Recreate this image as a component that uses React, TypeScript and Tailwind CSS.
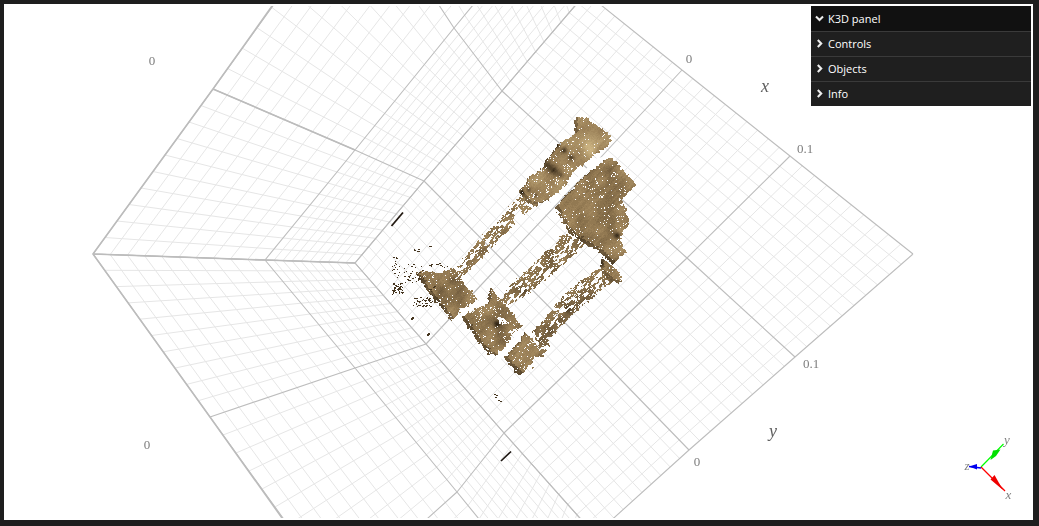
import React from "react";

type P = [number, number];

// ---------- grid ----------
const floor: P[][] = [
  [[355, 263], [424, 181], [502, 91], [586, -7]],
  [[426, 344], [503.5, 261], [589, 170], [682, 70]],
  [[504, 433], [591, 349], [687, 258], [790, 156]],
  [[595, 535], [689, 450], [795, 357], [913, 254]],
];
const upper: P[][] = [
  [[93, 254], [265, 260], [355, 263]],
  [[213, 89], [355, 150], [424, 181]],
  [[360, -115], [454, 28], [502, 91]],
  [[500, -290], [560, -100], [586, -7]],
];
const lower: P[][] = [
  [[93, 254], [265, 260], [355, 263]],
  [[210, 417], [355, 368], [426, 344]],
  [[340, 597], [457, 492], [504, 433]],
  [[460, 770], [567, 627], [595, 535]],
];

const lerp = (a: P, b: P, t: number): P => [a[0] + (b[0] - a[0]) * t, a[1] + (b[1] - a[1]) * t];
const seg = (a: P, b: P) => `M${a[0].toFixed(1)} ${a[1].toFixed(1)}L${b[0].toFixed(1)} ${b[1].toFixed(1)}`;

function gridPaths(t: P[][]) {
  let minor = "";
  let major = "";
  for (let i = 0; i < t.length - 1; i++) {
    for (let j = 0; j < t[0].length - 1; j++) {
      const a = t[i][j], b = t[i][j + 1], c = t[i + 1][j + 1], d = t[i + 1][j];
      for (let k = 1; k < 10; k++) {
        const f = k / 10;
        minor += seg(lerp(a, b, f), lerp(d, c, f));
        minor += seg(lerp(a, d, f), lerp(b, c, f));
      }
    }
  }
  for (let i = 0; i < t.length; i++) for (let j = 0; j < t[0].length - 1; j++) major += seg(t[i][j], t[i][j + 1]);
  for (let j = 0; j < t[0].length; j++) for (let i = 0; i < t.length - 1; i++) major += seg(t[i][j], t[i + 1][j]);
  return { minor, major };
}
const grids = [gridPaths(floor), gridPaths(upper), gridPaths(lower)];

// ---------- scan point cloud ----------
const hash = (x: number, y: number) => {
  const s = Math.sin(x * 127.1 + y * 311.7) * 43758.5453;
  return s - Math.floor(s);
};
const vnoise = (x: number, y: number) => {
  const xi = Math.floor(x), yi = Math.floor(y);
  const fx = x - xi, fy = y - yi;
  const ux = fx * fx * (3 - 2 * fx), uy = fy * fy * (3 - 2 * fy);
  const a = hash(xi, yi), b = hash(xi + 1, yi), c = hash(xi, yi + 1), d = hash(xi + 1, yi + 1);
  return a + (b - a) * ux + (c - a) * uy + (a - b - c + d) * ux * uy;
};
// traced in 3x crop coordinates with origin (380,100)
const Z = (pts: number[][]): P[] => pts.map(([x, y]) => [380 + x / 3, 100 + y / 3]);
const inside = (poly: P[], x: number, y: number) => {
  let r = false;
  for (let i = 0, j = poly.length - 1; i < poly.length; j = i++) {
    const [xi, yi] = poly[i], [xj, yj] = poly[j];
    if (yi > y !== yj > y && x < ((xj - xi) * (y - yi)) / (yj - yi) + xi) r = !r;
  }
  return r;
};
type Region = { poly: P[]; base: number; density: number };
const regions: Region[] = [
  { base: 0.58, density: 1, poly: Z([[590,47],[615,50],[650,75],[690,105],[692,125],[665,150],[640,165],[610,190],[585,205],[565,235],[555,255],[505,295],[470,315],[440,305],[415,275],[445,232],[478,208],[505,170],[528,138],[560,115],[585,100],[580,70]]) },
  { base: 0.52, density: 0.6, poly: Z([[420,285],[475,312],[435,335],[395,375],[345,430],[295,480],[240,530],[222,520],[262,460],[312,402],[362,352],[402,302]]) },
  { base: 0.52, density: 1, poly: Z([[690,168],[720,200],[765,250],[750,270],[720,295],[735,320],[745,370],[720,410],[735,455],[695,490],[655,455],[610,425],[570,400],[550,370],[525,320],[560,280],[620,220]]) },
  { base: 0.56, density: 1, poly: Z([[665,470],[690,492],[725,525],[720,545],[690,545],[660,510]]) },
  { base: 0.48, density: 0.63, poly: Z([[550,400],[615,425],[590,455],[540,500],[490,540],[430,590],[380,618],[355,600],[398,545],[448,502],[498,452]]) },
  { base: 0.46, density: 0.65, poly: Z([[660,502],[694,545],[655,575],[610,610],[560,660],[510,710],[470,732],[458,690],[512,632],[552,582],[612,532]]) },
  { base: 0.5, density: 1, poly: Z([[100,512],[175,515],[220,505],[270,570],[290,600],[240,630],[215,660],[180,620],[140,570]]) },
  { base: 0.5, density: 1, poly: Z([[240,650],[290,622],[320,610],[330,560],[370,610],[415,665],[430,680],[395,705],[365,745],[345,768],[325,760],[290,720],[270,690]]) },
  { base: 0.53, density: 1, poly: Z([[370,772],[405,735],[435,697],[470,730],[475,760],[450,790],[420,825],[395,800]]) },
  { base: 0.46, density: 0.58, poly: Z([[470,725],[505,700],[505,740],[475,780],[460,805],[448,790]]) },
];
const holes: P[][] = [
  Z([[345,648],[375,655],[385,675],[360,672]]),
  Z([[385,690],[425,682],[395,712]]),
  Z([[252,548],[272,538],[282,556],[264,566]]),
];
const patches: [number, number, number, number][] = [
  // crop x, crop y, radius, delta tone
  [500, 195, 13, -0.36], [520, 210, 14, -0.4], [540, 225, 10, -0.28],
  [532, 135, 8, -0.34], [552, 150, 8, -0.36], [572, 170, 8, -0.34],
  [445, 268, 7, -0.2], [465, 285, 7, -0.2], [425, 275, 7, -0.42],
  [625, 135, 32, 0.26], [710, 405, 10, -0.5], [215, 540, 14, -0.18], [350, 670, 11, -0.36],
  [660, 490, 9, -0.26], [430, 570, 10, -0.2], [560, 625, 12, -0.2],
];
const whites: P[][] = [
  Z([[470,335],[525,300],[590,235],[650,175],[680,168],[625,215],[555,280],[510,330],[455,385]]),
  Z([[218,665],[290,605],[325,590],[335,610],[290,622],[240,650]]),
  Z([[345,770],[425,690],[440,700],[360,780]]),
];
const STEPS = 24;
const ramp = (t: number) => {
  const s: [number, number, number][] = [[34, 24, 12], [152, 126, 86], [224, 202, 148]];
  const [a, b, f] = t < 0.55 ? [s[0], s[1], t / 0.55] : [s[1], s[2], (t - 0.55) / 0.45];
  return `rgb(${a.map((v, i) => Math.round(v + (b[i] - v) * f)).join(",")})`;
};
function buildScan() {
  const buckets: string[] = Array(STEPS).fill("");
  const done = new Set<number>();
  for (const r of regions) {
    const xs = r.poly.map((p) => p[0]), ys = r.poly.map((p) => p[1]);
    for (let y = Math.floor(Math.min(...ys)) - 2; y < Math.max(...ys) + 2; y++) {
      for (let x = Math.floor(Math.min(...xs)) - 2; x < Math.max(...xs) + 2; x++) {
        const key = y * 2000 + x;
        if (done.has(key)) continue;
        const jx = (vnoise(x * 0.5, y * 0.5) - 0.5) * 3.5;
        const jy = (vnoise(x * 0.5 + 40, y * 0.5 + 9) - 0.5) * 3.5;
        if (!inside(r.poly, x + jx, y + jy)) continue;
        done.add(key);
        const h = hash(x, y);
        if (holes.some((p) => inside(p, x + jx, y + jy)) && h < 0.85) continue;
        if (r.density >= 1) {
          if (h < 0.03) continue;
          if (vnoise(x * 0.25 + 5, y * 0.25) > 0.8 && h < 0.25) continue;
        } else {
          const n = vnoise((x + y) * 0.45, (x - y) * 0.2);
          if (n > r.density || h < 0.1) continue;
        }
        let t = r.base + (vnoise(x * 0.1, y * 0.1) - 0.5) * 0.2 + (h - 0.5) * 0.05;
        t += (vnoise((x + y) * 0.4, (x - y) * 0.05) - 0.5) * 0.08;
        if (r.density >= 1 && !inside(r.poly, x + jx - 3, y + jy + 2)) t -= 0.2;
        const cx = (x - 380) * 3, cy = (y - 100) * 3;
        for (const [px, py, rad, d] of patches) {
          const q = ((cx - px) ** 2 + (cy - py) ** 2) / (rad * rad);
          if (q < 4) t += d * Math.exp(-q);
        }
        t = Math.max(0, Math.min(0.999, t));
        buckets[Math.floor(t * STEPS)] += `M${x} ${y}h1v1h-1z`;
      }
    }
  }
  return buckets;
}
const scan = buildScan();

function buildDust() {
  let d = "";
  const areas: [number, number, number, number, number][] = [
    [50, 565, 16, 16, 50], [125, 605, 26, 13, 46], [90, 520, 40, 30, 34], [45, 500, 14, 30, 16],
    [110, 450, 8, 6, 8], [150, 440, 4, 3, 3], [145, 580, 24, 30, 12], [170, 495, 30, 5, 12],
  ];
  let s = 3;
  for (const [cx, cy, rx, ry, n] of areas) {
    for (let i = 0; i < n; i++) {
      s += 1;
      const x = Math.round(380 + (cx + (hash(s, 7) * 2 - 1) * rx) / 3);
      const y = Math.round(100 + (cy + (hash(s, 13) * 2 - 1) * ry) / 3);
      d += `M${x} ${y}h${hash(s, 3) > 0.7 ? 2 : 1}v1h-${hash(s, 3) > 0.7 ? 2 : 1}z`;
    }
  }
  for (const [x, y] of [[95, 650], [92, 653], [140, 703], [143, 700]]) {
    d += `M${Math.round(380 + x / 3)} ${Math.round(100 + y / 3)}h2v2h-2z`;
  }
  for (const [x, y] of [[494, 394], [496, 395], [495, 397], [498, 400], [500, 401]]) d += `M${x} ${y}h2v1h-2z`;
  return d;
}
const dust = buildDust();

// ---------- components ----------
function Chevron({ open }: { open?: boolean }) {
  return (
    <svg width="9" height="9" viewBox="0 0 9 9" className="shrink-0">
      <path
        d={open ? "M1 2.6L4.5 6L8 2.6" : "M2.8 1L6.2 4.5L2.8 8"}
        fill="none"
        stroke="#eeeeee"
        strokeWidth="2.1"
      />
    </svg>
  );
}

function Row({ label, open }: { label: string; open?: boolean }) {
  return (
    <div
      className={`flex h-[25px] items-center gap-[4px] pl-[4px] ${
        open ? "bg-[#111111] pb-[1px]" : "border-t border-[#3a3a3a] bg-[#1f1f1f] pb-[2px]"
      }`}
    >
      <Chevron open={open} />
      <span className="text-[11px] font-medium leading-none text-white">{label}</span>
    </div>
  );
}

function Viewport() {
  return (
    <svg width="1025" height="512" viewBox="6 6 1025 512" className="block">
      {grids.map((g, i) => (
        <path key={i} d={g.minor} fill="none" stroke="#e6e6e6" strokeWidth="1" />
      ))}
      {grids.map((g, i) => (
        <path key={i} d={g.major} fill="none" stroke="#bdbdbd" strokeWidth="1.1" />
      ))}
      <path
        d="M272 6L213 89L93 254L210 417L282 518M93 254L265 260L355 263M213 89L355 150"
        fill="none"
        stroke="#bcbcbc"
        strokeWidth="1.6"
      />
      {whites.map((w, i) => (
        <polygon key={i} points={w.map((p) => p.join(",")).join(" ")} fill="#ffffff" />
      ))}
      <g shapeRendering="crispEdges">
        {scan.map((d, i) => (d ? <path key={i} d={d} fill={ramp((i + 0.5) / STEPS)} /> : null))}
        <path d={dust} fill="#45351f" />
      </g>
      <path d="M391.5 226L403 212.5" stroke="#231a12" strokeWidth="1.8" />
      <path d="M501 461L511 451.5" stroke="#1c1510" strokeWidth="1.6" />

      <g className="fill-[#7d7d7d] font-['Liberation_Serif'] text-[13px] grayscale" textAnchor="middle">
        <text x="152" y="65">0</text>
        <text x="689" y="63">0</text>
        <text x="147" y="449">0</text>
        <text x="697" y="466">0</text>
        <text x="805" y="153">0.1</text>
        <text x="811" y="368">0.1</text>
      </g>
      <g className="fill-[#606060] font-['Liberation_Serif'] text-[18px] italic grayscale" textAnchor="middle">
        <text x="765" y="92">x</text>
        <text x="773" y="437">y</text>
      </g>

      {/* axes helper */}
      <path d="M981 467L1003.5 444" stroke="#00ff00" strokeWidth="1.2" />
      <path d="M990.5 460L993 450.5L1000.5 449.5L996 456Z" fill="#00e000" />
      <path d="M981 467L1005 491" stroke="#ff0000" strokeWidth="1.2" />
      <path d="M990.5 479.5L1003 490L994.5 475Z" fill="#ee0000" />
      <path d="M981 468L969 466.5" stroke="#0000ff" strokeWidth="1.6" />
      <path d="M969 466.5L977 464L977 469.5Z" fill="#0000ee" />
      <g className="fill-[#808080] font-['Liberation_Serif'] text-[13px] italic grayscale" textAnchor="middle">
        <text x="1007" y="444">y</text>
        <text x="967" y="470">z</text>
        <text x="1008.5" y="499">x</text>
      </g>
    </svg>
  );
}

export default function App() {
  return (
    <div className="h-[526px] w-[1039px] overflow-hidden bg-[#1e1e1e] pl-[4px] pt-[4px]">
      <div className="relative h-[516px] w-[1029px] overflow-hidden bg-white p-[2px]">
        <Viewport />
        <div className="absolute right-[2px] top-[2px] w-[220px] font-['Open_Sans']">
          <Row label="K3D panel" open />
          <Row label="Controls" />
          <Row label="Objects" />
          <Row label="Info" />
        </div>
      </div>
    </div>
  );
}
